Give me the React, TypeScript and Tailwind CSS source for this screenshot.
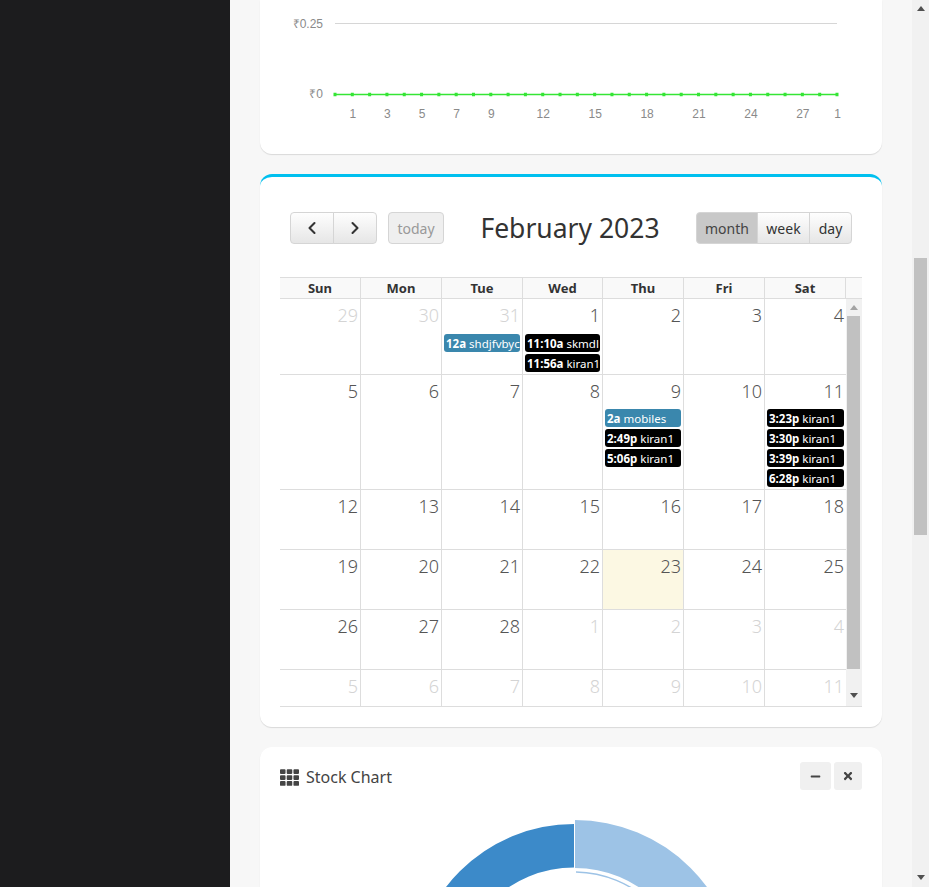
import { ChevronLeft, ChevronRight } from "lucide-react";
import { FaTh, FaMinus, FaTimes } from "react-icons/fa";

type CalEvent = { time: string; title: string; dark?: boolean };
type Day = { n: number; off?: boolean; today?: boolean; events?: CalEvent[] };

const COLS = [81, 81, 81, 80, 81, 81, 81];
const HEADERS = ["Sun", "Mon", "Tue", "Wed", "Thu", "Fri", "Sat"];
const K = (time: string): CalEvent => ({ time, title: "kiran1", dark: true });

const WEEKS: { height: string; days: Day[] }[] = [
  {
    height: "h-[76px]",
    days: [
      { n: 29, off: true },
      { n: 30, off: true },
      { n: 31, off: true, events: [{ time: "12a", title: "shdjfvbyc" }] },
      { n: 1, events: [{ time: "11:10a", title: "skmdl", dark: true }, K("11:56a")] },
      { n: 2 },
      { n: 3 },
      { n: 4 },
    ],
  },
  {
    height: "h-[115px]",
    days: [
      { n: 5 },
      { n: 6 },
      { n: 7 },
      { n: 8 },
      { n: 9, events: [{ time: "2a", title: "mobiles" }, K("2:49p"), K("5:06p")] },
      { n: 10 },
      { n: 11, events: [K("3:23p"), K("3:30p"), K("3:39p"), K("6:28p")] },
    ],
  },
  { height: "h-[60px]", days: [12, 13, 14, 15, 16, 17, 18].map((n) => ({ n })) },
  {
    height: "h-[60px]",
    days: [19, 20, 21, 22, 23, 24, 25].map((n) => ({ n, today: n === 23 })),
  },
  {
    height: "h-[60px]",
    days: [
      { n: 26 },
      { n: 27 },
      { n: 28 },
      { n: 1, off: true },
      { n: 2, off: true },
      { n: 3, off: true },
      { n: 4, off: true },
    ],
  },
  { height: "h-[37px]", days: [5, 6, 7, 8, 9, 10, 11].map((n) => ({ n, off: true })) },
];

const X_LABELS: [number, string][] = [
  [1, "1"],
  [3, "3"],
  [5, "5"],
  [7, "7"],
  [9, "9"],
  [12, "12"],
  [15, "15"],
  [18, "18"],
  [21, "21"],
  [24, "24"],
  [27, "27"],
  [29, "1"],
];

function Arrow({ down, className }: { down?: boolean; className?: string }) {
  return (
    <svg width="8" height="5" viewBox="0 0 8 5" className={className}>
      <path d={down ? "M0 0h8L4 5z" : "M0 5h8L4 0z"} fill="currentColor" />
    </svg>
  );
}

function LineChart() {
  const xs = Array.from({ length: 30 }, (_, i) => 75 + i * 17.31);
  return (
    <svg width="622" height="154" className="block font-['Liberation_Sans',sans-serif]">
      <line x1="75" x2="577" y1="23.5" y2="23.5" stroke="#d6d6d6" />
      <text x="63" y="28" textAnchor="end" fontSize="12" fill="#8a8a8a">₹0.25</text>
      <text x="63" y="98" textAnchor="end" fontSize="12" fill="#8a8a8a">₹0</text>
      <line x1="75" x2="577" y1="94.5" y2="94.5" stroke="#35e535" strokeWidth="1.5" />
      {xs.map((x) => (
        <rect key={x} x={x - 1.5} y="92.75" width="3" height="3.5" fill="#35e535" />
      ))}
      {X_LABELS.map(([i, label]) => (
        <text key={i} x={xs[i] + 0.5} y="118" textAnchor="middle" fontSize="12" fill="#8a8a8a">
          {label}
        </text>
      ))}
    </svg>
  );
}

function DoughnutChart() {
  return (
    <svg width="582" height="170" className="mt-[25px] block">
      {/* dark slice */}
      <path d="M294 7A161.5 161.5 0 0 0 132.5 168.5H176A118 118 0 0 1 294 50.5Z" fill="#3c8ac9" />
      {/* light slice */}
      <path d="M295 3A163.5 163.5 0 0 1 458.5 166.5H410.5A115.5 115.5 0 0 0 295 51Z" fill="#9dc3e6" />
      {/* thin inner ring */}
      <path d="M296 55A111.5 111.5 0 0 1 405.5 166.5" fill="none" stroke="#9dc3e6" strokeWidth="1.5" />
    </svg>
  );
}

function Event({ event }: { event: CalEvent }) {
  return (
    <div
      className={`mx-[2px] mb-[2px] h-[18px] overflow-hidden whitespace-nowrap rounded-[3px] px-[2px] text-[11.5px] leading-[19px] text-white ${
        event.dark ? "bg-black" : "bg-[#3a87ad]"
      }`}
    >
      <span className="font-bold">{event.time}</span> {event.title}
    </div>
  );
}

function Calendar() {
  return (
    <div>
      <div className="flex border-y border-[#ddd] bg-[#f9f9f9]">
        {HEADERS.map((h, i) => (
          <div
            key={h}
            style={{ width: COLS[i] }}
            className="h-[20px] border-r border-[#ddd] text-center text-[13px] font-bold leading-[21px] text-[#333]"
          >
            {h}
          </div>
        ))}
        <div className="flex-1" />
      </div>
      <div className="flex">
        <div className="w-[566px]">
          {WEEKS.map((week, w) => (
            <div key={w} className={`flex border-b border-[#ddd] ${week.height}`}>
              {week.days.map((day, i) => (
                <div
                  key={i}
                  style={{ width: COLS[i] }}
                  className={`overflow-hidden ${i < 6 ? "border-r border-[#ddd]" : ""} ${
                    day.today ? "bg-[#fcf8e3]" : ""
                  }`}
                >
                  <div
                    className={`${w === 1 ? "h-[34px]" : "h-[35px]"} pr-[2px] pt-[1px] text-right text-[18px] font-light leading-[30px] ${
                      day.off ? "text-[#d4d4d4]" : "text-[#555]"
                    }`}
                  >
                    {day.n}
                  </div>
                  {day.events?.map((e) => <Event key={e.time} event={e} />)}
                </div>
              ))}
            </div>
          ))}
        </div>
        <div className="flex w-[16px] flex-col items-start border-b border-[#ddd] bg-[#f1f1f1] pl-[1px]">
          <div className="flex h-[17px] w-[13px] items-center justify-center">
            <Arrow className="text-[#a3a3a3]" />
          </div>
          <div className="h-[353px] w-[13px] bg-[#c1c1c1]" />
          <div className="flex w-[13px] flex-1 items-center justify-center pt-[16px]">
            <Arrow down className="text-[#505050]" />
          </div>
        </div>
      </div>
    </div>
  );
}

const BTN = "flex h-[32px] items-center justify-center border border-[#d5d5d5] text-[14px]";
const BTN_BG = "bg-gradient-to-b from-[#fefefe] to-[#e6e6e6] text-[#333]";

export default function App() {
  return (
    <div className="flex h-screen overflow-hidden font-['Noto_Sans',sans-serif]">
      <aside className="w-[230px] shrink-0 bg-[#1c1c1e]" />

      <main className="flex-1 overflow-hidden bg-[#f7f7f7] px-[30px]">
        <section className="h-[154px] rounded-b-xl bg-white shadow-[0_1px_1px_rgba(0,0,0,0.12)]">
          <LineChart />
        </section>

        <section className="mt-[20px] h-[553px] rounded-xl border-t-[3px] border-[#00c0ef] bg-white px-[20px] pt-[35px] shadow-[0_1px_1px_rgba(0,0,0,0.12)]">
          <div className="relative mb-[33px] flex h-[32px] items-center pl-[10px] pr-[10px]">
            <div className="flex">
              <button className={`${BTN} ${BTN_BG} w-[44px] rounded-l-[4px]`}>
                <ChevronLeft size={20} strokeWidth={2.5} />
              </button>
              <button className={`${BTN} ${BTN_BG} -ml-px w-[44px] rounded-r-[4px]`}>
                <ChevronRight size={20} strokeWidth={2.5} />
              </button>
            </div>
            <button className={`${BTN} ml-[11px] w-[56px] rounded-[4px] bg-[#efefef] text-[13.5px] text-[#999]`}>
              today
            </button>
            <h2 className="flex-1 text-center text-[26.5px] leading-[32px] font-normal text-[#333]">
              February 2023
            </h2>
            <div className="flex">
              <button className={`${BTN} w-[62px] rounded-l-[4px] bg-[#c8c8c8] text-[13.5px] text-[#444]`}>
                month
              </button>
              <button className={`${BTN} ${BTN_BG} -ml-px w-[53px] text-[13.5px]`}>week</button>
              <button className={`${BTN} ${BTN_BG} -ml-px w-[43px] rounded-r-[4px] text-[13.5px]`}>day</button>
            </div>
          </div>
          <Calendar />
        </section>

        <section className="mt-[20px] rounded-xl bg-white px-[20px] shadow-[0_1px_1px_rgba(0,0,0,0.12)]">
          <div className="flex items-start justify-between pt-[15px]">
            <div className="flex h-[30px] items-center gap-[7px] text-[16px] text-[#444]">
              <FaTh size={19} />
              <span>Stock Chart</span>
            </div>
            <div className="flex gap-[3px]">
              <button className="flex h-[28px] w-[31px] items-center justify-center rounded-[3px] bg-[#f0f0f0] text-[#444]">
                <FaMinus size={11} />
              </button>
              <button className="flex h-[28px] w-[28px] items-center justify-center rounded-[3px] bg-[#f0f0f0] text-[#444]">
                <FaTimes size={12} />
              </button>
            </div>
          </div>
          <DoughnutChart />
        </section>
      </main>

      <div className="flex w-[17px] shrink-0 flex-col items-center bg-[#f1f1f1]">
        <div className="flex h-[17px] items-center justify-center">
          <Arrow className="text-[#505050]" />
        </div>
        <div className="mt-[241px] h-[277px] w-[13px] bg-[#c1c1c1]" />
        <div className="flex flex-1 items-end justify-center pb-[7px]">
          <Arrow down className="text-[#505050]" />
        </div>
      </div>
    </div>
  );
}
